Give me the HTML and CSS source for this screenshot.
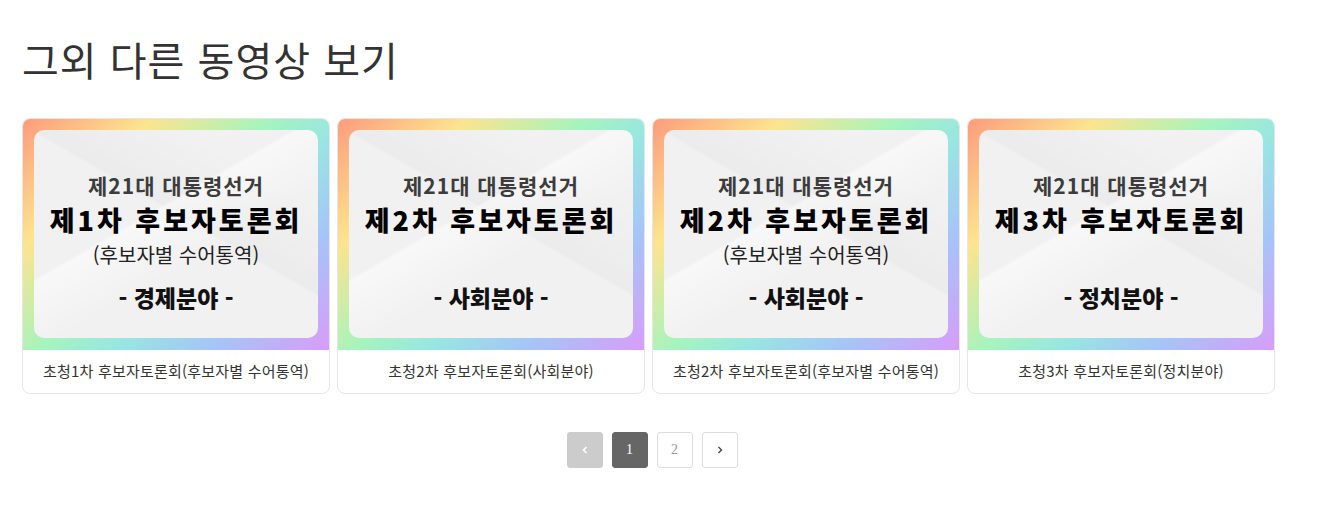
FILE: index.html
```html
<!DOCTYPE html>
<html lang="ko">

<head>
    <meta charset="UTF-8">
    <meta name="viewport" content="width=device-width, initial-scale=1.0">
    <title>그외 다른 동영상 보기</title>
    <link rel="stylesheet" href="styles.css">
</head>

<body>
    <div id="videos">
        <h2 class="section-title">그외 다른 동영상 보기</h2>

        <div class="video-list">
            <div class="video-card">
                <div class="thumb">
                    <div class="panel">
                        <div class="line-top">제21대 대통령선거</div>
                        <div class="line-main">제1차 후보자토론회</div>
                        <div class="line-sub">(후보자별 수어통역)</div>
                        <div class="line-field">- 경제분야 -</div>
                    </div>
                </div>
                <div class="caption">초청1차 후보자토론회(후보자별 수어통역)</div>
            </div>
            <div class="video-card">
                <div class="thumb">
                    <div class="panel">
                        <div class="line-top">제21대 대통령선거</div>
                        <div class="line-main">제2차 후보자토론회</div>
                        <div class="line-sub"></div>
                        <div class="line-field">- 사회분야 -</div>
                    </div>
                </div>
                <div class="caption">초청2차 후보자토론회(사회분야)</div>
            </div>
            <div class="video-card">
                <div class="thumb">
                    <div class="panel">
                        <div class="line-top">제21대 대통령선거</div>
                        <div class="line-main">제2차 후보자토론회</div>
                        <div class="line-sub">(후보자별 수어통역)</div>
                        <div class="line-field">- 사회분야 -</div>
                    </div>
                </div>
                <div class="caption">초청2차 후보자토론회(후보자별 수어통역)</div>
            </div>
            <div class="video-card">
                <div class="thumb">
                    <div class="panel">
                        <div class="line-top">제21대 대통령선거</div>
                        <div class="line-main">제3차 후보자토론회</div>
                        <div class="line-sub"></div>
                        <div class="line-field">- 정치분야 -</div>
                    </div>
                </div>
                <div class="caption">초청3차 후보자토론회(정치분야)</div>
            </div>
        </div>

        <div class="pagination">
            <a class="page-btn prev" href="#">
                <svg width="8" height="10" viewBox="0 0 8 10"><path d="M5.5 2 L2.5 5 L5.5 8" fill="none" stroke="#fff" stroke-width="1.6"/></svg>
            </a>
            <a class="page-btn active" href="#">1</a>
            <a class="page-btn" href="#">2</a>
            <a class="page-btn next" href="#">
                <svg width="8" height="10" viewBox="0 0 8 10"><path d="M2.5 2 L5.5 5 L2.5 8" fill="none" stroke="#444" stroke-width="1.4"/></svg>
            </a>
        </div>
    </div>
</body>

</html>
```

FILE: styles.css
```css
body {
    margin: 0;
    background-color: #fff;
    font-family: "Noto Sans CJK KR", "Noto Sans", sans-serif;
    color: #333;
}

#videos {
    width: 1260px;
    padding: 0 22px;
}

.section-title {
    margin: 36px 0 36px;
    font-size: 40px;
    line-height: 46px;
    font-weight: 400;
    letter-spacing: 1px;
    color: #333;
}

.video-list {
    display: flex;
    gap: 7px;
}

.video-card {
    width: 308px;
    box-sizing: border-box;
    border: 1px solid #e6e6e6;
    border-radius: 8px;
    overflow: hidden;
}

.thumb {
    height: 232px;
    margin: -1px -1px 0;
    padding: 12px;
    box-sizing: border-box;
    background: linear-gradient(135deg, #fd9a7c 0%, #fde48e 24%, #a6f4bd 46%, #98e6e2 60%, #a6c4f8 78%, #d99bfa 100%);
}

.panel {
    height: 208px;
    border-radius: 10px;
    background-color: #f1f1f1;
    background-image:
        linear-gradient(150deg, rgba(255,255,255,0) 40%, rgba(255,255,255,0.5) 41%, rgba(255,255,255,0) 60%),
        linear-gradient(30deg, rgba(0,0,0,0) 55%, rgba(0,0,0,0.025) 56%, rgba(0,0,0,0) 80%);
    text-align: center;
    padding-top: 41px;
    box-sizing: border-box;
    color: #111;
}

.line-top {
    font-size: 21px;
    line-height: 28px;
    font-weight: 700;
    color: #3c3c3c;
    letter-spacing: 1px;
}

.line-main {
    margin-top: 7px;
    font-size: 27px;
    line-height: 28px;
    font-weight: 900;
    letter-spacing: 3px;
    color: #000;
}

.line-sub {
    height: 22px;
    margin-top: 10px;
    font-size: 20px;
    line-height: 22px;
    color: #222;
}

.line-field {
    margin-top: 17px;
    font-size: 23px;
    line-height: 28px;
    font-weight: 900;
    color: #111;
}

.caption {
    height: 43px;
    line-height: 42px;
    text-align: center;
    font-size: 15px;
    letter-spacing: 0.2px;
    color: #333;
}

.pagination {
    display: flex;
    justify-content: center;
    gap: 9px;
    margin-top: 38px;
}

.page-btn {
    width: 36px;
    height: 36px;
    box-sizing: border-box;
    border: 1px solid #ddd;
    border-radius: 3px;
    background-color: #fff;
    display: flex;
    align-items: center;
    justify-content: center;
    font-family: "Liberation Serif", serif;
    font-size: 14px;
    color: #999;
    text-decoration: none;
}

.page-btn.prev {
    background-color: #ccc;
    border-color: #ccc;
}

.page-btn.active {
    background-color: #666;
    border-color: #666;
    color: #fff;
}
```
